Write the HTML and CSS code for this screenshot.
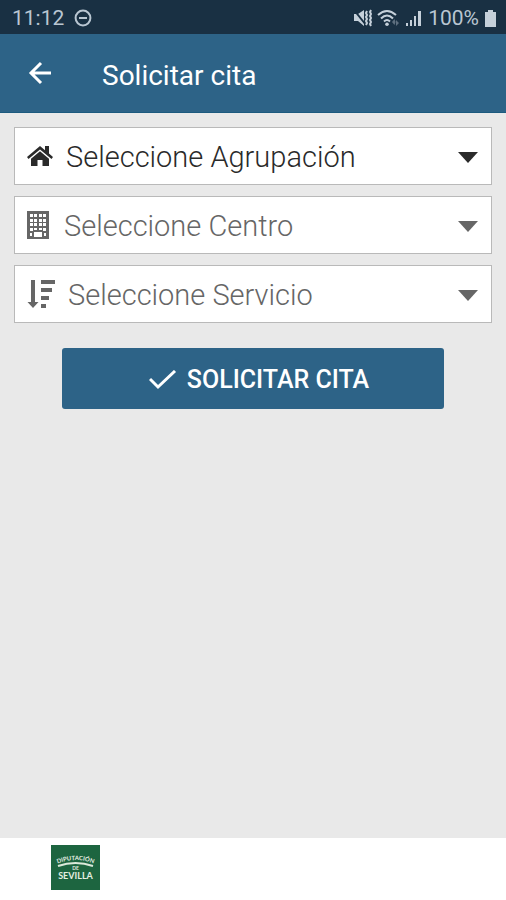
FILE: index.html
```html
<!DOCTYPE html>
<html lang="es">
<head>
<meta charset="utf-8">
<meta name="viewport" content="width=device-width, initial-scale=1">
<title>Solicitar cita</title>
<link rel="stylesheet" href="styles.css">
</head>
<body>
<div class="status">
  <span>11:12</span>
  <svg class="dnd" width="18" height="18" viewBox="0 0 18 18" aria-hidden="true"><circle cx="9" cy="9" r="7.400"/><path d="M5 9h8"/></svg>
  <div class="status-right">
    <svg width="19" height="18" viewBox="0 0 19 18" aria-hidden="true"><path class="fill" d="M1 5h4l6-4v16l-6-5H1z"/><path class="slash" d="M1 1l12 15"/><path class="line mid" d="M14 2l-1 2 1 2-1 2 1 2-1 2 1 2-1 2M18 1l-1 2 1 2-1 2 1 2-1 2 1 2-1 2 1 2"/></svg>
    <svg width="23" height="18" viewBox="0 0 23 18" aria-hidden="true"><path class="line thick" d="M1 6Q10-2 19 6M4 9.500Q10 3.500 16 9.500M7 12.500Q10 9.500 13 12.500"/><circle class="fill" cx="10" cy="15.200" r="1.800"/><path class="fill dim" d="M15 13l2.500-3 1 3-1 3zM19 17v-6l3 3z"/></svg>
    <svg width="18" height="18" viewBox="0 0 18 18" aria-hidden="true"><path class="fill" d="M1 14h2v3H1zM5 11h2v6H5zM9 7h2v10H9zM13 2h3v15h-3z"/></svg>
    <span class="level">100%</span>
    <svg width="13" height="19" viewBox="0 0 13 19" aria-hidden="true"><path class="fill" d="M4 1h5v2h3v15H1V3h3z"/></svg>
  </div>
</div>
<header class="bar">
  <button class="back" type="button" aria-label="Atrás"><svg width="24" height="24" viewBox="0 0 24 24"><path d="M23 12H3M13 2L3 12l10 10"/></svg></button>
  <h1>Solicitar cita</h1>
</header>
<main>
  <form class="form">
    <div class="field active">
      <label for="agrupacion" aria-label="Agrupación"><svg width="26" height="22" viewBox="0 0 26 22"><path d="M13 1L0 12l1.500 2L13 4.500 24.500 14l1.500-2-4-3.400V1h-4v4.200zM13 6.300L4 13.700V21h6.500v-6h5v6H22v-7.300z"/></svg></label>
      <select id="agrupacion"><option>Seleccione Agrupación</option></select>
    </div>
    <div class="field">
      <label for="centro" aria-label="Centro"><svg width="24" height="28" viewBox="0 0 24 28"><path fill-rule="evenodd" d="M0 0h22v28H0zM3 3v3h3V3zM7 3v3h3V3zM12 3v3h3V3zM16 3v3h3V3zM3 8v3h3V8zM7 8v3h3V8zM12 8v3h3V8zM16 8v3h3V8zM3 12v3h3v-3zM7 12v3h3v-3zM12 12v3h3v-3zM16 12v3h3v-3zM3 17v3h3v-3zM7 17v2h3v-2zM12 17v2h3v-2zM16 17v3h3v-3zM3 22v3h2v-3zM17 22v3h2v-3zM7 21v5h8v-5z"/></svg></label>
      <select id="centro"><option>Seleccione Centro</option></select>
    </div>
    <div class="field">
      <label for="servicio" aria-label="Servicio"><svg width="28" height="28" viewBox="0 0 28 28"><path d="M4 0h4v22h3.500L6 28 .5 22H4zM14 0h14v4H14zM14 8h11v4H14zM14 16h8v4h-8zM14 24h5v4h-5z"/></svg></label>
      <select id="servicio"><option>Seleccione Servicio</option></select>
    </div>
    <button class="submit" type="button"><svg width="28" height="20" viewBox="0 0 28 20" aria-hidden="true"><path d="M1 9l8 8L26 1"/></svg><span>SOLICITAR CITA</span></button>
  </form>
</main>
<footer>
  <svg width="49" height="46" viewBox="0 0 49 46" role="img" aria-label="Diputación de Sevilla">
    <rect y="1" width="49" height="45"/>
    <path id="arc" d="M5 20Q24.500 12 44 20"/>
    <path class="band" d="M7 22Q24.500 16 42 22"/>
    <text class="arc-text"><textPath href="#arc" startOffset="50%">DIPUTACIÓN</textPath></text>
    <text class="small" x="24.500" y="26">DE</text>
    <text class="name" x="24.500" y="35">SEVILLA</text>
  </svg>
</footer>
</body>
</html>
```
FILE: styles.css
```css
* { box-sizing: border-box; }

body {
  margin: 0;
  min-height: 100vh;
  display: flex;
  flex-direction: column;
  background: #e9e9e9;
  font-family: Roboto, "Liberation Sans", sans-serif;
}

.status {
  display: flex;
  align-items: center;
  height: 34px;
  padding: 2px 9px 0 12px;
  background: #193043;
  color: #b9c6d2;
  font-size: 21px;
}

.dnd { margin-left: 10px; fill: none; stroke: #b9c6d2; stroke-width: 2; }
.status-right { display: flex; align-items: center; gap: 5px; margin-left: auto; }
.fill { fill: #c5d0da; }
.dim { opacity: 0.4; }
.line { fill: none; stroke: #c5d0da; stroke-width: 1; }
.mid { stroke-width: 2; }
.thick { stroke-width: 2; }
.slash { fill: none; stroke: #193043; stroke-width: 2; }

.bar {
  display: flex;
  align-items: center;
  gap: 50px;
  height: 79px;
  padding: 0 28px;
  border-bottom: 1px solid #1c5a7e;
  background: #2d6387;
  color: #fff;
}

.back { display: flex; padding: 0; border: 0; background: none; }
.back svg { fill: none; stroke: #fff; stroke-width: 3; }

h1 { margin: 4px 0 0; font-size: 28px; font-weight: 400; }

main { flex: 1; padding: 14px; }
.form { display: flex; flex-direction: column; gap: 11px; }

.field {
  display: flex;
  align-items: center;
  height: 58px;
  border: 1px solid #b9b9b9;
  background: #fff;
  color: #666;
  position: relative;
}
.active { color: #2a2a2a; }

.field label { display: flex; padding: 0 13px 0 12px; }
.field label svg { fill: currentColor; }

.field select {
  flex: 1;
  align-self: stretch;
  min-width: 0;
  padding: 2px 0 0;
  border: 0;
  appearance: none;
  background: none;
  color: inherit;
  font: 300 29px Roboto, "Liberation Sans", sans-serif;
}

.field::after {
  content: "";
  position: absolute;
  right: 13px;
  top: 24px;
  border: solid transparent;
  border-width: 11px 10px 0;
  border-top-color: currentColor;
  pointer-events: none;
}

.submit {
  display: flex;
  align-items: center;
  justify-content: center;
  gap: 10px;
  height: 61px;
  margin: 14px 48px 0;
  padding: 2px 0 0 12px;
  border: 0;
  border-radius: 3px;
  background: #2d6387;
  color: #fff;
  font: 500 25px Roboto, "Liberation Sans", sans-serif;
}
.submit svg { fill: none; stroke: #fff; stroke-width: 3; }

footer { display: flex; padding: 6px 51px 10px; background: #fff; }
footer rect { fill: #1d6540; }
#arc { fill: none; }
.band { fill: none; stroke: #dce9da; stroke-width: 2; }
footer text {
  fill: #e4eee0;
  text-anchor: middle;
  font-family: Lato, sans-serif;
  font-weight: 700;
}
.arc-text { font-size: 6px; }
.small { font-size: 5px; }
.name { font-size: 9px; }
```
